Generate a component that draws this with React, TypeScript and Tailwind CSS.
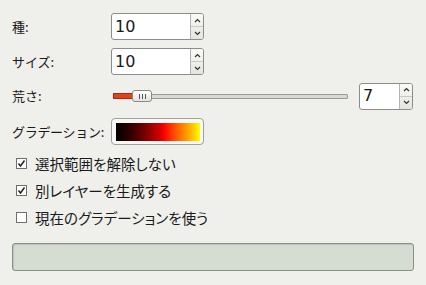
const font = "font-['Noto_Sans_CJK_JP','Noto_Sans',sans-serif]";

const SpinBox = ({ value, width }: { value: string; width: string }) => (
  <div className={`flex h-[27px] ${width} rounded-[3px] border border-[#8c8c8a] bg-white overflow-hidden`}>
    <div className="flex-1 flex items-center pl-[3px] text-[16px] text-[#1a1a1a] font-['DejaVu_Sans',sans-serif] leading-none">
      {value}
    </div>
    <div className="w-[13px] flex flex-col border-l border-[#b4b4b0] bg-gradient-to-b from-[#fafaf8] to-[#e4e4e0]">
      <div className="flex-1 flex items-center justify-center border-b border-[#c8c8c4]">
        <svg width="7" height="5" viewBox="0 0 7 5">
          <path d="M1 4 L3.5 1.5 L6 4" fill="none" stroke="#333" strokeWidth="1.2" />
        </svg>
      </div>
      <div className="flex-1 flex items-center justify-center">
        <svg width="7" height="5" viewBox="0 0 7 5">
          <path d="M1 1 L3.5 3.5 L6 1" fill="none" stroke="#333" strokeWidth="1.2" />
        </svg>
      </div>
    </div>
  </div>
);

const Check = ({ checked, label }: { checked: boolean; label: string }) => (
  <div className="flex items-center h-[27px] pl-[4px]">
    <div className="w-[11px] h-[11px] border border-[#6e6e6c] bg-white flex items-center justify-center">
      {checked && (
        <svg width="9" height="9" viewBox="0 0 9 9">
          <path d="M1.5 4.5 L3.5 7 L7.5 1.5" fill="none" stroke="#222" strokeWidth="1.5" />
        </svg>
      )}
    </div>
    <span className="ml-[8px] text-[14.5px] text-[#1a1a1a] [font-feature-settings:'palt']">{label}</span>
  </div>
);

const App = () => {
  return (
    <div className={`w-[426px] h-[285px] bg-[#efefec] px-[12px] pt-[13px] ${font}`}>
      <div className="flex items-center h-[27px]">
        <span className="w-[99px] text-[13px] text-[#1a1a1a]">種:</span>
        <SpinBox value="10" width="w-[93px]" />
      </div>
      <div className="flex items-center h-[27px] mt-[8px]">
        <span className="w-[99px] text-[13px] text-[#1a1a1a]">サイズ:</span>
        <SpinBox value="10" width="w-[93px]" />
      </div>
      <div className="flex items-center h-[26px] mt-[8px]">
        <span className="w-[101px] text-[13px] text-[#1a1a1a]">荒さ:</span>
        <div className="relative w-[235px] h-[12px] flex items-center">
          <div className="w-full h-[5px] border border-[#9a9a96] bg-[#d8d8d4] rounded-[1px]" />
          <div className="absolute left-0 top-[3px] w-[20px] h-[6px] bg-[#e3401c] border border-[#b02a0e]" />
          <div className="absolute left-[19px] top-0 w-[20px] h-[12px] rounded-[3px] border border-[#8a8a86] bg-gradient-to-b from-[#ffffff] to-[#e2e2de] flex items-center justify-center gap-[2px]">
            <div className="w-px h-[5px] bg-[#555]" />
            <div className="w-px h-[5px] bg-[#555]" />
            <div className="w-px h-[5px] bg-[#555]" />
          </div>
        </div>
        <div className="ml-[11px]">
          <SpinBox value="7" width="w-[54px]" />
        </div>
      </div>
      <div className="flex items-center h-[27px] mt-[9px]">
        <span className="w-[99px] text-[13px] text-[#1a1a1a] tracking-[-0.3px]">グラデーション:</span>
        <div className="w-[93px] h-[27px] rounded-[4px] border border-[#a0a09c] bg-[#f8f8f6] flex items-center justify-center">
          <div className="w-[84px] h-[18px] bg-[linear-gradient(to_right,#000000_0%,#3a0000_20%,#8a0000_38%,#d00000_52%,#ff0000_57%,#ff5a00_72%,#ffb000_88%,#ffff00_100%)]" />
        </div>
      </div>
      <div className="mt-[5px]">
        <Check checked label="選択範囲を解除しない" />
        <Check checked label="別レイヤーを生成する" />
        <Check checked={false} label="現在のグラデーションを使う" />
      </div>
      <div className="mt-[12px] h-[28px] w-[402px] rounded-[3px] border border-[#8a8f86] bg-[#d5ddd2] shadow-[inset_1px_1px_1px_rgba(0,0,0,0.12)]" />
    </div>
  );
};

export default App;
